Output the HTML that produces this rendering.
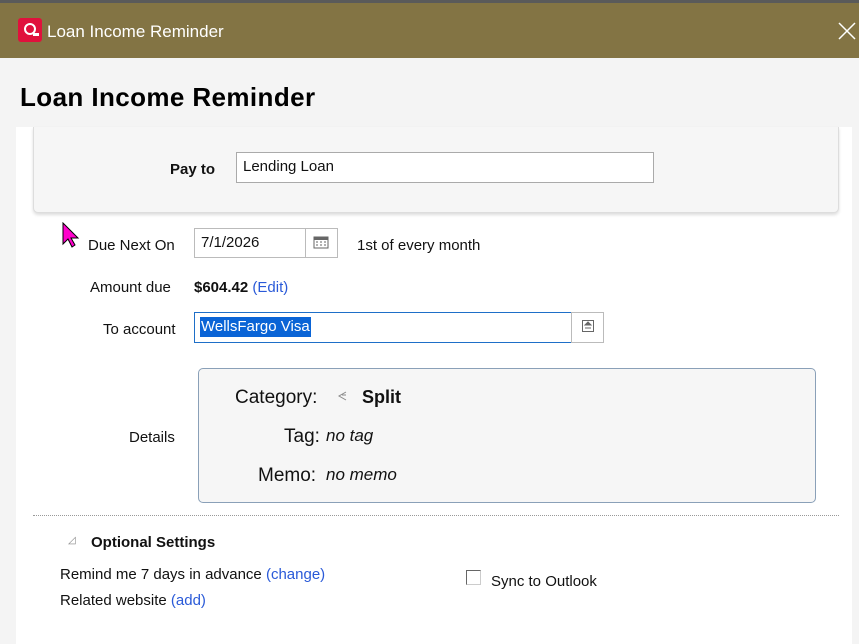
<!DOCTYPE html>
<html><head><style>
*{margin:0;padding:0;box-sizing:border-box}
body{width:859px;height:644px;overflow:hidden;background:#f4f4f4;font-family:"Segoe UI","Liberation Sans",sans-serif;color:#111;position:relative}
.a{position:absolute}
.t{font-size:15px}
.link{color:#2a5ad8}
</style></head><body>
<div class="a" style="left:0;top:0;width:859px;height:3px;background:#5a5a5a"></div>
<div class="a" style="left:0;top:3px;width:859px;height:55px;background:#837444"></div>
<div class="a" style="left:18px;top:18px;width:24px;height:24px;background:#e0113c;border-radius:3px"></div>
<div class="a" style="left:24px;top:23px;width:12px;height:12px;border:2.5px solid #fff;border-radius:50%"></div>
<div class="a" style="left:33px;top:33px;width:6px;height:2.5px;background:#fff"></div>
<div class="a" style="left:47px;top:22px;font-size:17px;color:#fff">Loan Income Reminder</div>
<svg class="a" style="left:838px;top:22px" width="18" height="18"><path d="M1 1L17 17M17 1L1 17" stroke="#fff" stroke-width="1.5"/></svg>
<div class="a" style="left:20px;top:82px;font-size:26px;font-weight:bold;color:#000;letter-spacing:0.4px">Loan Income Reminder</div>
<div class="a" style="left:16px;top:127px;width:836px;height:517px;background:#fff"></div>
<div class="a" style="left:33px;top:127px;width:806px;height:86px;background:#f6f6f6;border:1px solid #ddd;border-top:none;border-radius:0 0 5px 5px;box-shadow:0 2px 3px #ddd"></div>
<div class="a" style="left:170px;top:161px;font-size:15px;font-weight:bold">Pay to</div>
<div class="a t" style="left:236px;top:152px;width:418px;height:31px;background:#fff;border:1px solid #aaa;padding:5px 6px">Lending Loan</div>
<svg class="a" style="left:62px;top:222px" width="20" height="26"><path d="M1 1L1 22L6 17L10 25L13 23L9 16L16 16Z" fill="#ff00cc" stroke="#000" stroke-width="1"/></svg>
<div class="a t" style="left:88px;top:237px">Due Next On</div>
<div class="a t" style="left:194px;top:228px;width:112px;height:30px;border:1px solid #bbb;padding:5px 6px">7/1/2026</div>
<div class="a" style="left:305px;top:228px;width:33px;height:30px;border:1px solid #bbb"></div>
<svg class="a" style="left:313px;top:235px" width="16" height="14"><rect x="1" y="2" width="14" height="11" fill="none" stroke="#666"/><rect x="1" y="2" width="14" height="3" fill="#666"/><path d="M3 7h2M7 7h2M11 7h2M3 10h2M7 10h2M11 10h2" stroke="#666"/></svg>
<div class="a t" style="left:357px;top:237px">1st of every month</div>
<div class="a t" style="left:90px;top:279px">Amount due</div>
<div class="a t" style="left:194px;top:279px"><b>$604.42</b> <span class="link">(Edit)</span></div>
<div class="a t" style="left:103px;top:321px">To account</div>
<div class="a" style="left:194px;top:312px;width:378px;height:31px;border:1px solid #1e6fc8"></div>
<div class="a t" style="left:200px;top:317px;background:#0a64d6;color:#fff;padding:0 1px;line-height:20px">WellsFargo Visa</div>
<div class="a" style="left:571px;top:312px;width:33px;height:31px;border:1px solid #bbb"></div>
<svg class="a" style="left:582px;top:320px" width="12" height="12"><rect x=".5" y=".5" width="11" height="11" fill="none" stroke="#666"/><path d="M3 5h6L6 2ZM3 8h6" stroke="#666" fill="#666"/></svg>
<div class="a t" style="left:129px;top:429px">Details</div>
<div class="a" style="left:198px;top:368px;width:618px;height:135px;background:#f6f6f6;border:1px solid #8aa0b8;border-radius:5px"></div>
<div class="a" style="left:235px;top:387px;font-size:19px">Category:</div>
<svg class="a" style="left:336px;top:390px" width="12" height="12"><path d="M10 2L3 6L10 10M6 5L10 5" stroke="#888" fill="none"/></svg>
<div class="a" style="left:362px;top:387px;font-size:18px;font-weight:bold">Split</div>
<div class="a" style="left:284px;top:426px;font-size:19px">Tag:</div>
<div class="a" style="left:326px;top:426px;font-size:17px;font-style:italic">no tag</div>
<div class="a" style="left:258px;top:465px;font-size:19px">Memo:</div>
<div class="a" style="left:326px;top:465px;font-size:17px;font-style:italic">no memo</div>
<div class="a" style="left:33px;top:515px;width:806px;border-top:1px dotted #999"></div>
<div class="a" style="left:68px;top:535px;font-size:10px;color:#888">◿</div>
<div class="a t" style="left:91px;top:534px;font-weight:bold">Optional Settings</div>
<div class="a t" style="left:60px;top:566px">Remind me 7 days in advance <span class="link">(change)</span></div>
<div class="a t" style="left:60px;top:592px">Related website <span class="link">(add)</span></div>
<div class="a" style="left:466px;top:570px;width:15px;height:15px;border:1px solid #666;border-right-color:#ccc;border-bottom-color:#ccc"></div>
<div class="a t" style="left:491px;top:573px">Sync to Outlook</div>
</body></html>
